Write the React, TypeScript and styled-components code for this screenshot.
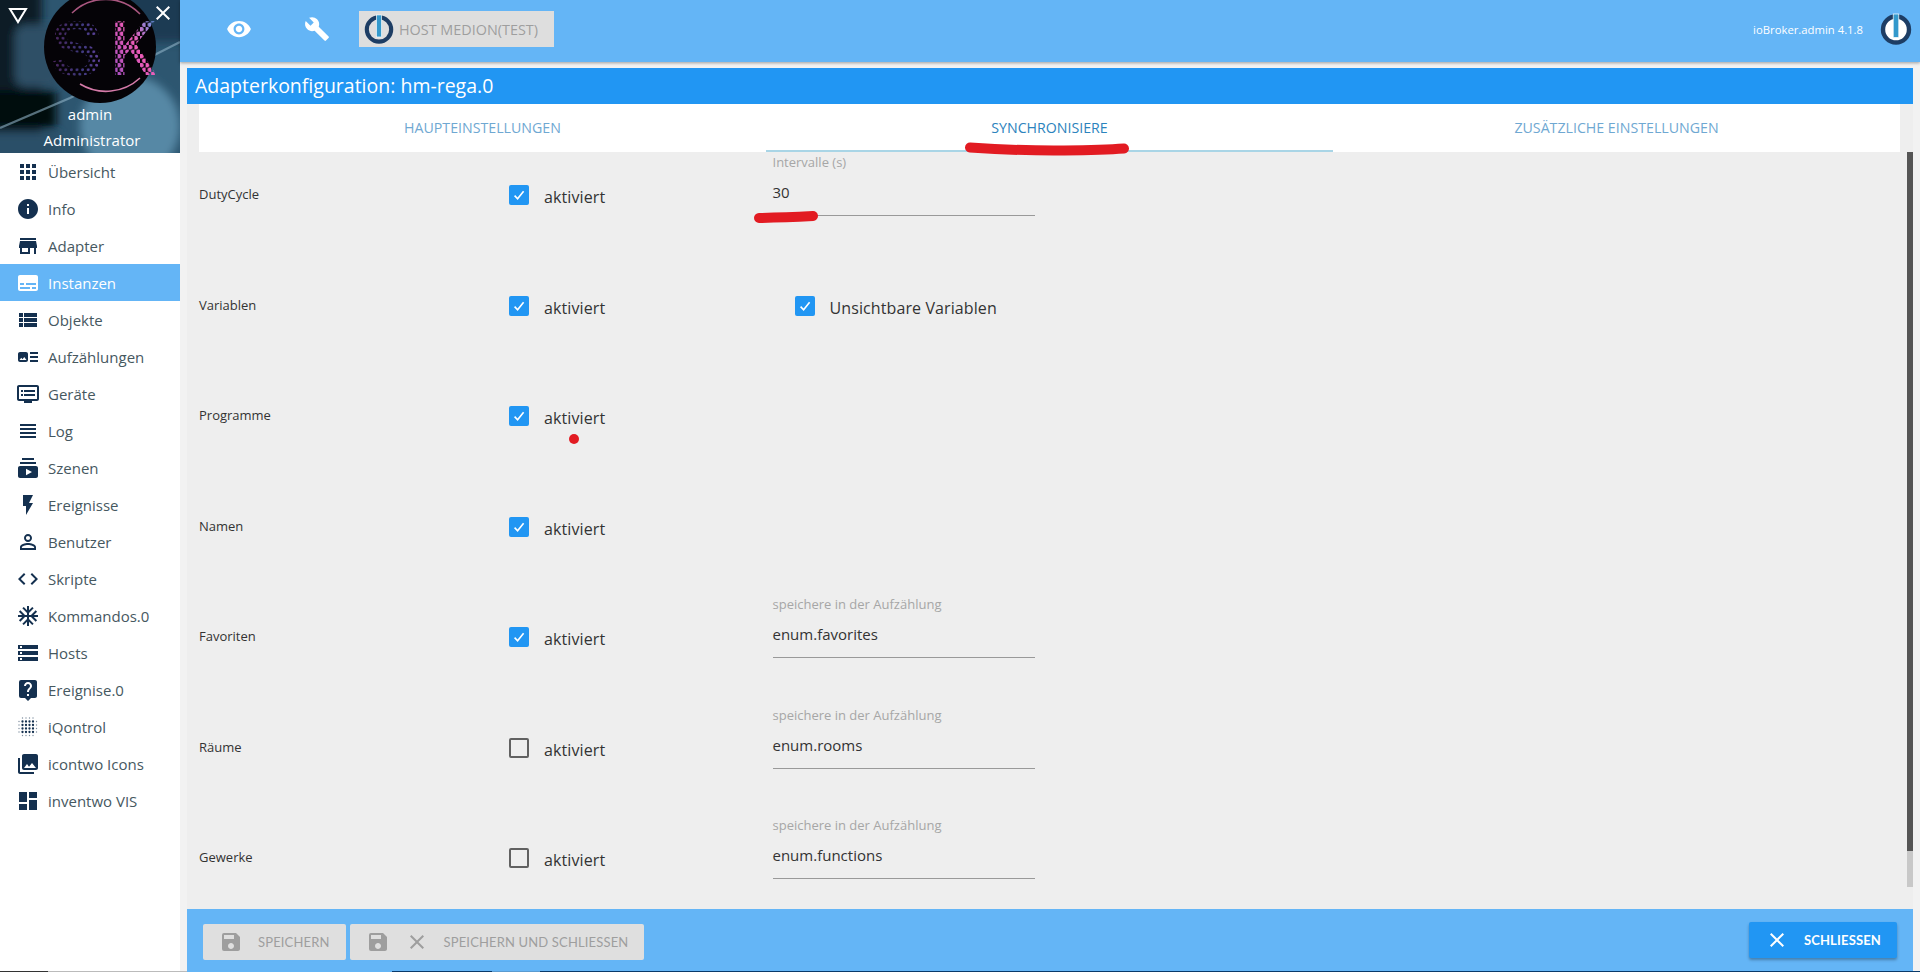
import React from 'react';
import styled, { createGlobalStyle } from 'styled-components';
import {
  MdApps, MdInfo, MdStore, MdSubtitles, MdViewList, MdArtTrack, MdDvr, MdViewHeadline,
  MdSubscriptions, MdFlashOn, MdPersonOutline, MdCode, MdAcUnit, MdStorage, MdLiveHelp,
  MdPhotoLibrary, MdDashboard, MdVisibility, MdBuild, MdClose, MdSave,
} from 'react-icons/md';

const Global = createGlobalStyle`
  html, body { margin: 0; padding: 0; background: #f2f2f2; }
  body { font-family: "Open Sans", "Liberation Sans", sans-serif; color: #333; }
  #root { height: 972px; overflow: hidden; }
  * { box-sizing: border-box; }
`;

const Page = styled.div`
  height: 972px;
  display: flex;
  flex-direction: column;
`;
const Main = styled.div`
  flex: 1;
  min-height: 0;
  display: flex;
`;
const Sidebar = styled.aside`
  width: 180px;
  flex: none;
  background: #fff;
`;
const Profile = styled.div`
  position: relative;
  height: 153px;
  padding-top: 103px;
  display: flex;
  flex-direction: column;
  align-items: center;
  color: #fff;
  font-size: 15px;
  line-height: 22px;
  overflow: hidden;
`;
const ProfileArt = styled.svg`
  position: absolute;
  inset: 0;
`;
const ProfileName = styled.div<{ $shift?: number }>`
  position: relative;
  margin-bottom: 4px;
  margin-left: ${(p) => p.$shift ?? 0}px;
`;
const Collapse = styled.svg`
  position: absolute;
  left: 8px;
  top: 7px;
`;
const ProfileClose = styled.div`
  position: absolute;
  left: 151px;
  top: 1px;
  display: flex;
  font-size: 24px;
`;
const NavItem = styled.div<{ $active?: boolean }>`
  height: 37px;
  display: flex;
  align-items: center;
  gap: 8px;
  padding-left: 16px;
  font-size: 15px;
  background: ${(p) => (p.$active ? '#64b5f6' : 'transparent')};
  color: ${(p) => (p.$active ? '#fff' : '#46585f')};
  svg {
    width: 24px;
    height: 24px;
    flex: none;
    color: ${(p) => (p.$active ? '#fff' : '#14304f')};
  }
`;
const Right = styled.div`
  flex: 1;
  min-width: 0;
  display: flex;
  flex-direction: column;
`;
const Header = styled.header`
  height: 62px;
  flex: none;
  background: #64b5f6;
  box-shadow: 0 1px 3px rgba(0, 0, 0, 0.35);
  display: flex;
  align-items: center;
  padding: 0 8px 4px 0;
  position: relative;
  z-index: 1;
  color: #fff;
`;
const HeaderIcon = styled.div<{ $left: number }>`
  margin-left: ${(p) => p.$left}px;
  display: flex;
  font-size: 26px;
`;
const HostButton = styled.div`
  margin-left: 29px;
  width: 195px;
  height: 36px;
  background: #dedede;
  color: #9e9e9e;
  display: flex;
  align-items: center;
  gap: 5px;
  padding-left: 5px;
  font-size: 14.4px;
`;
const Version = styled.div`
  margin-left: auto;
  font-size: 11.3px;
  margin-right: 17px;
`;
const Panel = styled.div`
  flex: 1;
  min-height: 0;
  display: flex;
  flex-direction: column;
  margin: 6px 7px 0;
  background: #eee;
`;
const Title = styled.div`
  height: 36px;
  flex: none;
  background: #2196f3;
  color: #fff;
  font-size: 19.5px;
  line-height: 36px;
  padding-left: 8px;
`;
const Tabs = styled.div`
  position: relative;
  flex: none;
  margin: 0 13px 0 12px;
  height: 48px;
  background: #fff;
  display: grid;
  grid-template-columns: repeat(3, 1fr);
`;
const Tab = styled.div<{ $active?: boolean }>`
  display: flex;
  align-items: center;
  justify-content: center;
  font-size: 14.2px;
  text-transform: uppercase;
  color: ${(p) => (p.$active ? '#2b83bd' : '#6fa8d2')};
  border-bottom: 2px solid ${(p) => (p.$active ? '#a9d5e6' : 'transparent')};
`;
const TabMark = styled.svg`
  position: absolute;
  left: 765px;
  top: 38px;
`;
const Body = styled.div`
  flex: 1;
  min-height: 0;
  display: flex;
`;
const FormBody = styled.div`
  flex: 1;
  min-width: 0;
  padding-left: 12px;
  overflow: hidden;
`;
const Row = styled.div`
  height: 110.5px;
  display: grid;
  grid-template-columns: 310px 263.5px 262.5px;
`;
const RowLabel = styled.div`
  padding-top: 32px;
  font-size: 13px;
  line-height: 20px;
  color: #333;
`;
const CheckGroup = styled.div<{ $indent?: number }>`
  position: relative;
  display: flex;
  align-items: flex-start;
  gap: 15px;
  padding-top: 33px;
  margin-left: ${(p) => p.$indent ?? 0}px;
`;
const CheckBox = styled.div<{ $checked: boolean }>`
  width: 20px;
  height: 20px;
  flex: none;
  border-radius: 2px;
  background: ${(p) => (p.$checked ? '#2196f3' : 'transparent')};
  border: ${(p) => (p.$checked ? 'none' : '2px solid #616161')};
  display: flex;
  align-items: center;
  justify-content: center;
`;
const CheckText = styled.div`
  font-size: 16px;
  letter-spacing: 0.1px;
  line-height: 24px;
  color: #333;
`;
const RedDot = styled.div`
  position: absolute;
  left: 60px;
  top: 61px;
  width: 10px;
  height: 10px;
  border-radius: 50%;
  background: #e21b22;
`;
const Field = styled.div`
  position: relative;
`;
const FieldLabel = styled.div`
  font-size: 13px;
  line-height: 20px;
  color: #a6a6a6;
`;
const FieldValue = styled.div`
  margin-top: 10px;
  height: 34px;
  font-size: 15px;
  line-height: 21px;
  color: #333;
  border-bottom: 1px solid #999;
`;
const ValueMark = styled.svg`
  position: absolute;
  left: -20px;
  top: 58px;
`;
const ScrollTrack = styled.div`
  width: 6px;
  flex: none;
  margin-bottom: 22px;
  background: #c8c8c8;
`;
const ScrollThumb = styled.div`
  height: 699px;
  background: #555;
`;
const Footer = styled.footer`
  height: 62px;
  flex: none;
  background: #64b5f6;
  display: flex;
  justify-content: space-between;
  align-items: flex-start;
  padding: 13px 16px 0;
`;
const SaveGroup = styled.div`
  display: flex;
  gap: 4px;
  padding-top: 2px;
`;
const Button = styled.div<{ $primary?: boolean }>`
  height: 36px;
  display: flex;
  align-items: center;
  gap: 15px;
  padding: 0 16px;
  border-radius: 2px;
  font-family: Lato, "Open Sans", sans-serif;
  font-size: 13px;
  font-weight: ${(p) => (p.$primary ? 700 : 400)};
  letter-spacing: 0.15px;
  background: ${(p) => (p.$primary ? '#2196f3' : '#dfdfdf')};
  color: ${(p) => (p.$primary ? '#fff' : '#9e9e9e')};
  box-shadow: ${(p) => (p.$primary ? '0 2px 3px rgba(0,0,0,.3)' : 'none')};
  svg {
    width: 24px;
    height: 24px;
    flex: none;
  }
`;
const Strip = styled.div`
  height: 1px;
  flex: none;
  display: flex;
`;
const StripPart = styled.div<{ $w?: number; $c: string }>`
  flex: ${(p) => (p.$w ? `0 0 ${p.$w}px` : '1')};
  background: ${(p) => p.$c};
`;

const Logo = ({ size, fill }: { size: number; fill: string }) => (
  <svg width={size} height={size} viewBox="0 0 32 32">
    <circle cx="16" cy="16.5" r="13" fill={fill} stroke="#1d3d64" strokeWidth="4.4" />
    <rect x="13.2" y="1" width="5.6" height="23.5" fill="#3399cc" stroke="#fff" strokeWidth="0.7" />
  </svg>
);

const dotPositions = [3, 6.5, 10, 13.5, 17, 20.5];

const DotGrid = () => (
  <svg viewBox="0 0 24 24" fill="#14304f">
    {dotPositions.flatMap((y, r) =>
      dotPositions.map((x, c) => {
        const rowEdge = r === 0 || r === 5;
        const colEdge = c === 0 || c === 5;
        if (rowEdge && colEdge) return null;
        const edge = rowEdge || colEdge;
        return <circle key={`${r}-${c}`} cx={x} cy={y} r={edge ? 0.7 : 1.15} opacity={edge ? 0.55 : 1} />;
      }),
    )}
  </svg>
);

const navItems: { label: string; icon: React.ReactNode; active?: boolean }[] = [
  { label: 'Übersicht', icon: <MdApps /> },
  { label: 'Info', icon: <MdInfo /> },
  { label: 'Adapter', icon: <MdStore /> },
  { label: 'Instanzen', icon: <MdSubtitles />, active: true },
  { label: 'Objekte', icon: <MdViewList /> },
  { label: 'Aufzählungen', icon: <MdArtTrack /> },
  { label: 'Geräte', icon: <MdDvr /> },
  { label: 'Log', icon: <MdViewHeadline /> },
  { label: 'Szenen', icon: <MdSubscriptions /> },
  { label: 'Ereignisse', icon: <MdFlashOn /> },
  { label: 'Benutzer', icon: <MdPersonOutline /> },
  { label: 'Skripte', icon: <MdCode /> },
  { label: 'Kommandos.0', icon: <MdAcUnit /> },
  { label: 'Hosts', icon: <MdStorage /> },
  { label: 'Ereignise.0', icon: <MdLiveHelp /> },
  { label: 'iQontrol', icon: <DotGrid /> },
  { label: 'icontwo Icons', icon: <MdPhotoLibrary /> },
  { label: 'inventwo VIS', icon: <MdDashboard /> },
];

const Check = ({ checked, label, indent, dot }: { checked: boolean; label: string; indent?: number; dot?: boolean }) => (
  <CheckGroup $indent={indent}>
    <CheckBox $checked={checked}>
      {checked && (
        <svg width="14" height="14" viewBox="0 0 14 14" fill="none">
          <path d="M2.6 7.6 L5.6 10.8 L11.6 3.2" stroke="#fff" strokeWidth="1.6" />
        </svg>
      )}
    </CheckBox>
    <CheckText>{label}</CheckText>
    {dot && <RedDot />}
  </CheckGroup>
);

const ProfileBackground = () => (
  <ProfileArt width="180" height="153" viewBox="0 0 180 153">
    <defs>
      <filter id="soft"><feGaussianBlur stdDeviation="4" /></filter>
      <pattern id="hexS" width="5.6" height="9" patternUnits="userSpaceOnUse">
        <circle cx="1.4" cy="2.2" r="1.5" fill="#fff" />
        <circle cx="4.2" cy="6.7" r="1.5" fill="#fff" />
      </pattern>
      <pattern id="hexK" width="5.6" height="9" patternUnits="userSpaceOnUse">
        <circle cx="1.4" cy="2.2" r="2.3" fill="#fff" />
        <circle cx="4.2" cy="6.7" r="2.3" fill="#fff" />
      </pattern>
      <mask id="dotsS"><rect width="180" height="153" fill="url(#hexS)" /></mask>
      <mask id="dotsK"><rect width="180" height="153" fill="url(#hexK)" /></mask>
      <linearGradient id="sGrad" x1="0" y1="0" x2="1" y2="0">
        <stop offset="0" stopColor="#4a2258" />
        <stop offset="0.6" stopColor="#3f3a80" />
        <stop offset="1" stopColor="#6a45a5" />
      </linearGradient>
      <linearGradient id="kGrad" x1="0" y1="1" x2="1" y2="0">
        <stop offset="0" stopColor="#8f4cc4" />
        <stop offset="0.55" stopColor="#ee5cb8" />
        <stop offset="1" stopColor="#36a8f0" />
      </linearGradient>
    </defs>
    <rect width="180" height="153" fill="#2d5670" />
    <g filter="url(#soft)">
      <rect x="-10" y="-10" width="52" height="175" fill="#0e1c28" />
      <rect x="15" y="25" width="45" height="62" rx="10" fill="#2f4f66" />
      <rect x="-10" y="90" width="66" height="38" fill="#050a10" />
      <rect x="120" y="-10" width="70" height="52" fill="#1b3a52" />
      <circle cx="130" cy="126" r="50" fill="#5688a5" />
      <rect x="-10" y="132" width="70" height="30" fill="#2a5067" />
    </g>
    <path d="M0 128 L70 98 L180 42" stroke="#8fb2c6" strokeWidth="2.4" fill="none" opacity="0.6" />
    <circle cx="100" cy="47" r="56" fill="#050307" />
    <path d="M72 13 A48 48 0 0 1 140 14" stroke="#a9567f" strokeWidth="1.6" fill="none" />
    <path d="M80 84 A50 50 0 0 0 140 78" stroke="#d57aa8" strokeWidth="1.6" fill="none" />
    <g fontFamily="Liberation Sans" fontWeight="700" fontSize="77">
      <text x="50" y="75" mask="url(#dotsS)" fill="url(#sGrad)" textLength="53" lengthAdjust="spacingAndGlyphs">S</text>
      <text x="111" y="75" mask="url(#dotsK)" fill="url(#kGrad)" textLength="46" lengthAdjust="spacingAndGlyphs">K</text>
    </g>
  </ProfileArt>
);

const EnumField = ({ value }: { value: string }) => (
  <Field>
    <FieldLabel>speichere in der Aufzählung</FieldLabel>
    <FieldValue>{value}</FieldValue>
  </Field>
);

export default function App() {
  return (
    <Page>
      <Global />
      <Main>
        <Sidebar>
          <Profile>
            <ProfileBackground />
            <Collapse width="20" height="17" viewBox="0 0 20 17">
              <path d="M2 2 H18 L10 15 Z" fill="none" stroke="#fff" strokeWidth="2" />
            </Collapse>
            <ProfileClose><MdClose /></ProfileClose>
            <ProfileName>admin</ProfileName>
            <ProfileName $shift={4}>Administrator</ProfileName>
          </Profile>
          {navItems.map((n) => (
            <NavItem key={n.label} $active={n.active}>
              {n.icon}
              {n.label}
            </NavItem>
          ))}
        </Sidebar>
        <Right>
          <Header>
            <HeaderIcon $left={46}><MdVisibility /></HeaderIcon>
            <HeaderIcon $left={52}><MdBuild /></HeaderIcon>
            <HostButton>
              <Logo size={30} fill="transparent" />
              HOST MEDION(TEST)
            </HostButton>
            <Version>ioBroker.admin 4.1.8</Version>
            <Logo size={32} fill="#fff" />
          </Header>
          <Panel>
            <Title>Adapterkonfiguration: hm-rega.0</Title>
            <Tabs>
              <Tab>Haupteinstellungen</Tab>
              <Tab $active>Synchronisiere</Tab>
              <Tab>Zusätzliche Einstellungen</Tab>
              <TabMark width="166" height="14" viewBox="0 0 166 14">
                <path d="M6 5.5 Q60 9 100 8.5 T160 6.5" stroke="#e21b22" strokeWidth="10" strokeLinecap="round" fill="none" />
              </TabMark>
            </Tabs>
            <Body>
              <FormBody>
                <Row>
                  <RowLabel>DutyCycle</RowLabel>
                  <Check checked label="aktiviert" />
                  <Field>
                    <FieldLabel>Intervalle (s)</FieldLabel>
                    <FieldValue>30</FieldValue>
                    <ValueMark width="66" height="14" viewBox="0 0 66 14">
                      <path d="M6 8 Q30 7.5 60 6" stroke="#e21b22" strokeWidth="10" strokeLinecap="round" fill="none" />
                    </ValueMark>
                  </Field>
                </Row>
                <Row>
                  <RowLabel>Variablen</RowLabel>
                  <Check checked label="aktiviert" />
                  <Check checked label="Unsichtbare Variablen" indent={22} />
                </Row>
                <Row>
                  <RowLabel>Programme</RowLabel>
                  <Check checked label="aktiviert" dot />
                </Row>
                <Row>
                  <RowLabel>Namen</RowLabel>
                  <Check checked label="aktiviert" />
                </Row>
                <Row>
                  <RowLabel>Favoriten</RowLabel>
                  <Check checked label="aktiviert" />
                  <EnumField value="enum.favorites" />
                </Row>
                <Row>
                  <RowLabel>Räume</RowLabel>
                  <Check checked={false} label="aktiviert" />
                  <EnumField value="enum.rooms" />
                </Row>
                <Row>
                  <RowLabel>Gewerke</RowLabel>
                  <Check checked={false} label="aktiviert" />
                  <EnumField value="enum.functions" />
                </Row>
              </FormBody>
              <ScrollTrack><ScrollThumb /></ScrollTrack>
            </Body>
            <Footer>
              <SaveGroup>
                <Button><MdSave />SPEICHERN</Button>
                <Button><MdSave /><MdClose />SPEICHERN UND SCHLIESSEN</Button>
              </SaveGroup>
              <Button $primary><MdClose />SCHLIESSEN</Button>
            </Footer>
          </Panel>
        </Right>
      </Main>
      <Strip>
        <StripPart $w={48} $c="#333" />
        <StripPart $w={139} $c="#bbb" />
        <StripPart $w={205} $c="#64b5f6" />
        <StripPart $w={100} $c="#0a3a6a" />
        <StripPart $w={48} $c="#5b9bd0" />
        <StripPart $c="#0a3a6a" />
      </Strip>
    </Page>
  );
}
